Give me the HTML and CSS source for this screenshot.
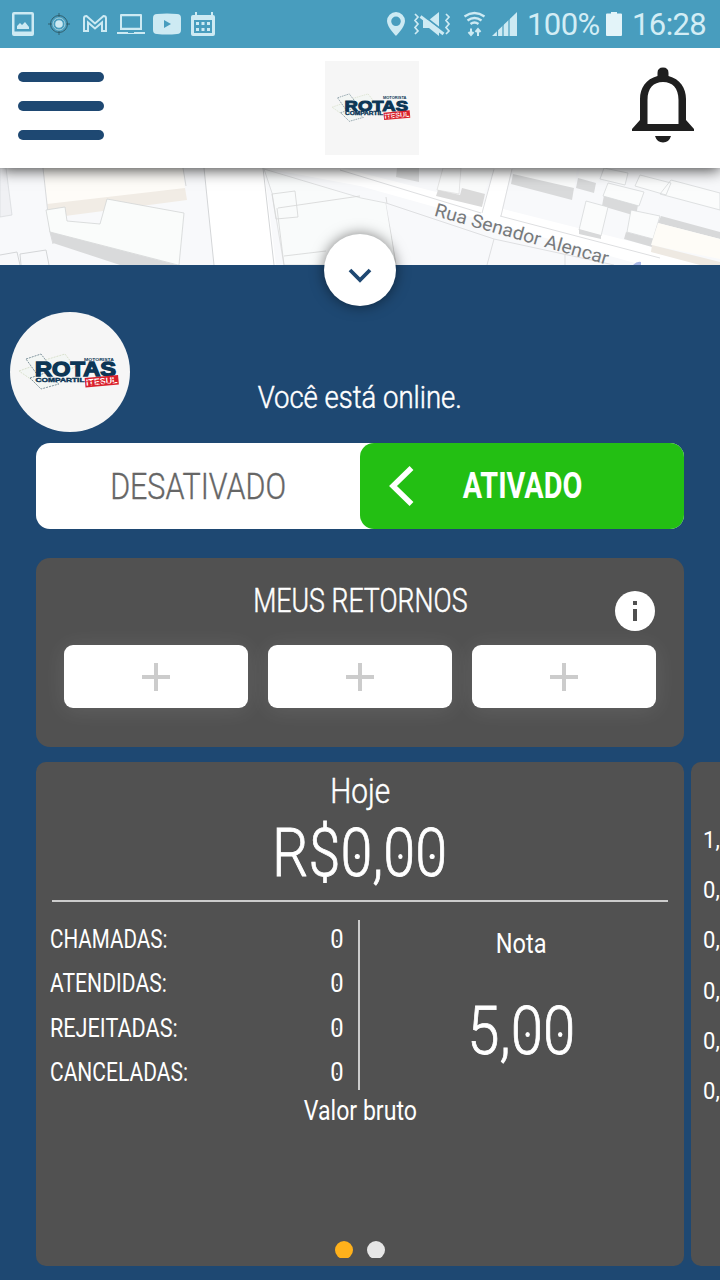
FILE: index.html
```html
<!DOCTYPE html>
<html lang="pt-BR">
<head>
<meta charset="utf-8">
<title>Rotas Motorista</title>
<link rel="stylesheet" href="styles.css">
</head>
<body>
<svg class="defs" width="0" height="0" aria-hidden="true">
  <symbol id="logo" viewBox="0 0 120 120">
    <g fill="#f3f6f4" stroke-width=".7">
      <path d="M9 59l14-5 15 17-6 4zM35 48l20-6 10 13-18 8z" stroke="#cfd8bd" stroke-dasharray="2 1"/>
      <path d="M16 47l15-5 10 13-15 6zM20 66l15-5 14 11-18 5z" stroke="#506c7a" stroke-dasharray="2 1"/>
    </g>
    <g font-family="Liberation Sans, Arial, sans-serif" font-weight="700" fill="#0c3656">
      <text x="74" y="48.600" font-size="4.200" textLength="30" lengthAdjust="spacingAndGlyphs">MOTORISTA</text>
      <text x="25" y="64" font-size="19.500" textLength="81" lengthAdjust="spacingAndGlyphs" stroke="#0c3656" stroke-width="1.300">ROTAS</text>
      <text x="25.500" y="69.500" font-size="6.200" textLength="49" lengthAdjust="spacingAndGlyphs" stroke="#0c3656" stroke-width=".4">COMPARTIL</text>
    </g>
    <g transform="rotate(-5 91 69)">
      <rect x="75" y="64.500" width="33.500" height="9.500" fill="#d9202c"/>
      <text x="76" y="72.500" font-family="Liberation Sans, Arial, sans-serif" font-weight="700" font-size="9" textLength="31.500" lengthAdjust="spacingAndGlyphs" fill="#fff">ITESUL</text>
      <path d="M75 68.500h33M79 71.500h26" stroke="#d9202c" stroke-width=".8" stroke-dasharray="3 1.500"/>
    </g>
  </symbol>
</svg>

<div class="statusbar">
  <svg class="status-icons" width="230" height="48" viewBox="0 0 230 48" fill="#cdeaf3">
    <path fill-rule="evenodd" d="M14 12h18q2 0 2 2v20q0 2-2 2H14q-2 0-2-2V14q0-2 2-2zm.5 2.500v17h17v-17z"/>
    <path d="M17 29v-3l3-3 2 2 3-3 4 5v2z"/>
    <g stroke="#31606f" fill="none"><circle cx="59" cy="24" r="8.500"/><path d="M59 13v4M59 31v4M48 24h4M66 24h4"/><circle cx="59" cy="24" r="6" stroke="#a5cfdc"/></g>
    <circle cx="59" cy="24" r="3.800"/>
    <path d="M84 31V18q0-2 2.500-2l8.500 7.500 8.500-7.500q2.500 0 2.500 2v13h-4v-8.500L95 28.500l-7-6V31z" fill="none" stroke="#cdeaf3" stroke-width="2"/>
    <path fill-rule="evenodd" d="M121 14h20q1 0 1 1v15h-22V15q0-1 1-1zm1 2.300v11.500h18V16.300zM117 32h11v1h6v-1h11v2h-28z"/>
    <path fill-rule="evenodd" d="M157 14q10-1 20 0 4 0 4 4v12q0 4-4 4-10 1-20 0-4 0-4-4V18q0-4 4-4zm7 6v8l7-4z"/>
    <path fill-rule="evenodd" d="M195 12h2v3h14v-3h2v3h0q2 0 2 2v17q0 2-2 2h-20q-2 0-2-2V17q0-2 2-2h2zm-1 8v13h18V20z"/>
    <path d="M196 22h3v3h-3zM201.500 22h3v3h-3zM207 22h3v3h-3zM196 28h3v3h-3zM201.500 28h3v3h-3zM207 28h3v3h-3z"/>
  </svg>
  <div class="status-right">
    <svg width="134" height="48" viewBox="386 0 134 48" fill="#cdeaf3">
      <path fill-rule="evenodd" d="M396 12a9 9 0 0 1 9 9c0 6-9 15-9 15s-9-9-9-15a9 9 0 0 1 9-9zm0 4.500a4.800 4.800 0 1 0 0 9.600 4.800 4.800 0 0 0 0-9.600z"/>
      <path d="M423 20h6l10-8v24l-10-8h-6z"/>
      <path d="M422 14.500l23 18" stroke="#489dbe" stroke-width="2"/><path d="M420.500 16.500l23 17.500" stroke="#cdeaf3" stroke-width="3"/>
      <path d="M415 14l3 3-3 3.500 3 3.500-3 3.500 3 3.500-3 3M446 14l3 3-3 3.500 3 3.500-3 3.500 3 3.500-3 3" fill="none" stroke="#cdeaf3" stroke-width="1.700"/>
      <g fill="none" stroke="#cdeaf3" stroke-width="2.300"><path d="M464.500 16.500q10-7 20 0M467.500 20.500q7-5 14 0M470.500 24q4-3 8 0"/><path d="M471 28.500v6M468.500 32l2.500 3 2.500-3M478 36v-6M475.500 32l2.500-3 2.500 3" stroke-width="2"/></g>
      <path d="M492 36L517 12v24z"/>
      <path d="M509 15v22M503 20v17M497.500 25v12" stroke="#489dbe" stroke-width="1.200"/>
    </svg>
    <span class="status-text pct">100%</span>
    <svg width="18" height="48" viewBox="0 0 18 48" fill="#e3f4f9"><path d="M1 14.500q0-1 1-1h4V12h6v1.500h4q1 0 1 1V35q0 1-1 1H2q-1 0-1-1z"/></svg>
    <span class="status-text clock">16:28</span>
  </div>
</div>

<header class="topbar">
  <div class="menu"><i></i><i></i><i></i></div>
  <svg class="brand" width="94" height="94"><use href="#logo"/></svg>
  <svg class="bell" width="64" height="78" viewBox="0 0 64 78" fill="#1f1f1f">
    <path fill-rule="evenodd" d="M26.500 10V7q0-5.500 5.500-5.500T37.500 7v3C49 13 55 22 55 33v21l8 9v2H1v-2l8-9V33c0-11 6-20 17.500-23zM16.500 58h31V34c0-12-6-18-15.500-18s-15.500 6-15.500 18z"/>
    <path d="M24 70h16q-2 6.500-8 6.500T24 70z"/>
  </svg>
</header>

<section class="map">
  <svg width="720" height="97" viewBox="0 168 720 97">
    <rect y="168" width="720" height="97" fill="#f8f9fb"/>
    <path d="M204 168h60l12 97h-62z" fill="#fff"/>
    <path d="M264 168h78l378 96v1h-78L360 186z" fill="#fff"/>
    <path d="M494 168h18l-13 52-18-5z" fill="#fff"/>
    <path d="M0 168h6l6 47-12 2z" fill="#f0f1f4" stroke="#d5d8db" stroke-width=".7"/>
    <path d="M43 168h140l2 21-137 17z" fill="#fefcf8"/><path d="M47 204l138-16 2 12-137 18z" fill="#f1ece5"/>
    <path d="M43 168l7 64 3 12M183 168l3 18" stroke="#dadbdc" fill="none"/>
    <path d="M46 210l19-3 2 14 33 3 7-25 77 14-5 52h-1l-128-33z" fill="#fafcfb" stroke="#d3d5d5" stroke-width=".8"/>
    <path d="M50 232l127 33h-57l-67-22z" fill="#d9dadb"/>
    <path d="M204 168l10 97M263 168l11 97M0 255l17-3 3 13M21 265l-1-11 26-4 3 15" stroke="#d4d6d8" fill="none"/>
    <path d="M264 169l97 29 25 5 10 62H284l-12-72z" fill="#f9fbfb" stroke="#d9dbdc" stroke-width=".8"/>
    <path d="M272 194l23-3 3 26-22 2zM278 208l82-12M284 256l42-5M277 208l7 57M386 197l10 68" stroke="#d4d6d6" stroke-width=".8" fill="none"/>
    <path d="M386 203l108 36 112 26H397z" fill="#f8f9fb"/>
    <path d="M340 170l141 43M386 203l108 36 120 26M500 216l160 42M512 169l-11 47M494 239l-7 26M565 255v10M494 169l-12 44" stroke="#dedfe1" fill="none"/>
    <path d="M397 168h22v14l-23-5z" fill="#dedfe0"/>
    <path d="M443 168h18l-2 26-22-4z" fill="#fafbfb" stroke="#dcdddd" stroke-width=".7"/>
    <path d="M462 168h32l-10 25-24-4z" fill="#fafbfb"/><path d="M438 190l22 5 2-7 23 6-3 13-46-11z" fill="#dadada"/>
    <path d="M515 168h62l-3 21-61-15z" fill="#fafbfb"/><path d="M513 174l61 14-2 12-61-16z" fill="#d9dadb"/>
    <path d="M580 168h22l-4 14-20-4z" fill="#fafbfb"/><path d="M578 178l18 5-2 10-18-5zM604 195l34 10-2 11-34-10z" fill="#d9dadb"/>
    <path d="M608 183l36 9-5 14-36-10zM586 201l22 6-7 29-22-6zM631 210l29 6-7 23-26-7zM640 175l31 8-5 12-31-9zM671 180l49 13v17l-60-16zM604 168l24 5-3 12-25-6z" fill="#fbfcfc" stroke="#d7d9db" stroke-width=".8"/>
    <path d="M579 229l22 6v4l-22-5zM626 232l27 7-1 8-28-8zM661 216l59 16v7l-62-16z" fill="#d8d9da"/>
    <path d="M658 223l62 16v20l-69-14z" fill="#fefcf7"/><path d="M652 245l68 17v3h-20l-49-13z" fill="#eee9e2"/>
    <path d="M633 265q4-4 8-3v3z" fill="#a7b6e4"/>
    <text transform="translate(433.500 215.500) rotate(15.900)" font-family="Roboto, sans-serif" font-size="18.500" fill="#777a7c" textLength="180" lengthAdjust="spacingAndGlyphs">Rua Senador Alencar</text>
  </svg>
  <button class="collapse" aria-label="Recolher"><svg width="28" height="20" viewBox="0 0 28 20"><path d="M4 5l10 10L24 5" fill="none" stroke="#1e4872" stroke-width="3.800"/></svg></button>
</section>

<main class="panel">
  <div class="driver">
    <svg class="avatar" width="120" height="120"><use href="#logo"/></svg>
    <p class="online"><span class="t t-online">Você está online.</span></p>
  </div>

  <div class="toggle">
    <div class="off"><span class="t t-off">DESATIVADO</span></div>
    <div class="on">
      <svg width="28" height="42" viewBox="0 0 28 42"><path d="M24.500 3L6 21l18.500 18" fill="none" stroke="#fff" stroke-width="5.500"/></svg>
      <span class="t t-on">ATIVADO</span>
    </div>
  </div>

  <section class="returns">
    <div class="returns-head">
      <h2 class="t t-returns">MEUS RETORNOS</h2>
      <svg class="info" width="40" height="40" viewBox="0 0 40 40"><circle cx="20" cy="20" r="20" fill="#fff"/><path d="M18 10h4v4h-4zM18 18h4v12h-4z" fill="#505050"/></svg>
    </div>
    <div class="slots">
      <div class="slot"><i class="plus"></i></div>
      <div class="slot"><i class="plus"></i></div>
      <div class="slot"><i class="plus"></i></div>
    </div>
  </section>

  <div class="carousel">
    <section class="card today">
      <div class="day"><span class="t t-day">Hoje</span></div>
      <div class="amount"><span class="t t-amount">R$<b class="z">0</b>,<b class="z">0</b><b class="z">0</b></span></div>
      <div class="stats">
        <dl class="calls">
          <div><dt class="t t-c1">CHAMADAS:</dt><dd class="t"><b class="z">0</b></dd></div>
          <div><dt class="t t-c2">ATENDIDAS:</dt><dd class="t"><b class="z">0</b></dd></div>
          <div><dt class="t t-c3">REJEITADAS:</dt><dd class="t"><b class="z">0</b></dd></div>
          <div><dt class="t t-c4">CANCELADAS:</dt><dd class="t"><b class="z">0</b></dd></div>
        </dl>
        <div class="rating">
          <span class="t t-nota">Nota</span>
          <span class="t t-score">5,<b class="z">0</b><b class="z">0</b></span>
        </div>
      </div>
      <div class="gross"><span class="t t-gross">Valor bruto</span></div>
      <div class="dots"><i class="active"></i><i></i></div>
    </section>
    <section class="card next">
      <span>1,</span><span>0,</span><span>0,</span><span>0,</span><span>0,</span><span>0,</span>
    </section>
  </div>
</main>
</body>
</html>
```
FILE: styles.css
```css
* { box-sizing: border-box; }
html, body { margin: 0; height: 1280px; overflow: hidden; }
body { width: 720px; background: #1e4872; color: #fff; font-family: Roboto, sans-serif; }
h2, p, dl, dd { margin: 0; font-weight: 400; }
svg { display: block; flex: none; }
.defs { position: absolute; }

.statusbar { position: relative; z-index: 3; height: 48px; background: #489dbe; display: flex; justify-content: space-between; }
.status-right { display: flex; padding-right: 12px; }
.status-text { font-size: 31px; line-height: 50px; color: #d3edf5; white-space: nowrap; }
.pct { width: 85px; padding-left: 7px; letter-spacing: -.6px; }
.clock { width: 85px; padding-left: 9px; letter-spacing: -.6px; }

.topbar { position: relative; z-index: 2; height: 120px; background: #fff; display: flex; justify-content: space-between; align-items: flex-start; padding: 13px 25px 0 18px; box-shadow: 0 2px 14px rgba(0,0,0,.75); }
.menu { width: 86px; padding-top: 11px; display: flex; flex-direction: column; gap: 19px; }
.menu i { height: 10px; border-radius: 5px; background: #1e4872; }
.brand { background: #f6f6f6; margin-left: 9px; }
.bell { margin-top: 5px; }

.map { position: relative; height: 97px; }
.collapse { position: absolute; z-index: 3; left: 324px; top: 66px; width: 72px; height: 72px; padding: 10px 0 0; border: 0; border-radius: 50%; background: #fff; display: grid; place-items: center; box-shadow: 0 0 14px rgba(0,0,0,.5); }

.t { display: inline-block; white-space: nowrap; transform-origin: center; }
.panel { height: 1015px; padding-top: 47px; }
.driver { height: 131px; display: grid; grid-template-columns: 120px 460px; padding-left: 10px; }
.avatar { border-radius: 50%; background: #f6f6f6; }
.online { font-size: 32px; line-height: 39px; padding-top: 66px; text-align: center; }
.t-online { transform: scaleX(.86); font-weight: 300; -webkit-text-stroke: .5px; }

.toggle { margin: 0 36px; height: 86px; border-radius: 14px; background: #fff; display: grid; grid-template-columns: 1fr 1fr; grid-template-rows: 86px; font-size: 36px; line-height: 89px; }
.off { text-align: center; color: #666; font-weight: 300; }
.t-off { transform: scaleX(.845); -webkit-text-stroke: .4px; }
.on { display: flex; align-items: center; background: #23bf13; border-radius: 14px; padding-left: 27px; }
.on .t { width: 215px; text-align: center; }
.t-on { transform: scaleX(.8); font-weight: 700; }

.returns { margin: 29px 36px 15px; height: 189px; border-radius: 14px; background: #515151; padding: 24px 28px 0; }
.returns-head { height: 63px; display: flex; justify-content: center; align-items: flex-start; position: relative; }
.t-returns { font-size: 33px; line-height: 37px; font-weight: 300; transform: scaleX(.81); -webkit-text-stroke: .5px; }
.info { position: absolute; right: 1px; top: 9px; }
.slots { display: grid; grid-template-columns: repeat(3, 1fr); gap: 20px; }
.slot { height: 63px; border-radius: 9px; background: #fff; display: grid; place-items: center; box-shadow: 0 2px 22px rgba(255,255,255,.1); }
.plus { width: 28px; height: 28px; background: linear-gradient(#ccc,#ccc) center/28px 4px no-repeat, linear-gradient(#ccc,#ccc) center/4px 28px no-repeat; }

.carousel { display: flex; gap: 7px; padding-left: 36px; width: 720px; overflow: hidden; }
.card { flex: none; height: 504px; background: #515151; border-radius: 10px; }
.today { width: 648px; padding: 0 16px; display: flex; flex-direction: column; }
.day { text-align: center; font-size: 35px; line-height: 59px; height: 58px; font-weight: 300; }
.t-day { transform: scaleX(.85); -webkit-text-stroke: .5px; }
.amount { height: 82px; line-height: 67px; font-size: 66px; text-align: center; font-weight: 300; border-bottom: 2px solid #ccc; }
.t-amount { transform: scaleX(.87); -webkit-text-stroke: .8px; }
.stats { display: grid; grid-template-columns: 308px 1fr; padding-top: 18px; }
.calls { height: 170px; border-right: 2px solid #ccc; padding-right: 14px; font-size: 25px; }
.calls div { height: 44.400px; line-height: 39px; display: flex; justify-content: space-between; }
.calls dt { transform-origin: left; margin-left: -2px; }
.calls dd { transform: scaleX(.95); }
.t-c1 { transform: scaleX(.825); }
.t-c2 { transform: scaleX(.845); }
.t-c3 { transform: scaleX(.865); }
.t-c4 { transform: scaleX(.84); }
.rating { display: flex; flex-direction: column; align-items: center; padding-left: 15px; }
.t-nota { font-size: 28px; line-height: 47px; transform: scaleX(.84); }
.t-score { font-size: 66px; line-height: 67px; margin-top: 31px; font-weight: 300; transform: scaleX(.88); -webkit-text-stroke: .8px; }
.gross { font-size: 27.500px; line-height: 41px; text-align: center; }
.t-gross { transform: scaleX(.84); }
.dots { margin: auto auto 8px; display: flex; gap: 14px; height: 17px; overflow: hidden; }
.dots i { width: 18px; height: 18px; border-radius: 50%; background: #e6e6e6; }
.dots .active { background: #ffb11b; }
.z { font-weight: inherit; position: relative; }
.z::after { content: ""; position: absolute; left: 46%; top: 50%; width: .08em; height: .08em; border-radius: 50%; background: #fff; }
.next { width: 648px; padding: 53px 0 0 12px; display: flex; flex-direction: column; font-size: 24.500px; line-height: 50.200px; }
.next span { display: block; transform: scaleX(.9); transform-origin: left; }
```
